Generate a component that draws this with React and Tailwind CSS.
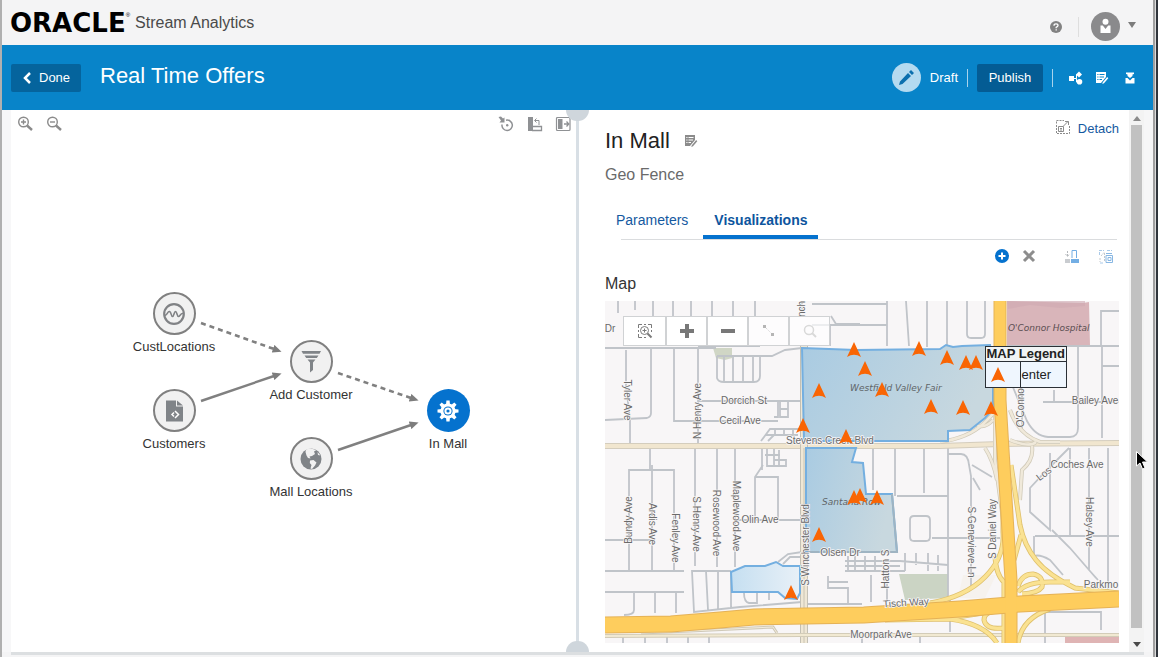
import React from "react";

const nodes = [
  { id: "CustLocations", x: 173, y: 314, icon: "wave" },
  { id: "Customers", x: 173, y: 411, icon: "file" },
  { id: "Add Customer", x: 310, y: 362, icon: "funnel" },
  { id: "Mall Locations", x: 310, y: 459, icon: "globe" },
  { id: "In Mall", x: 447, y: 411, icon: "gear" },
];

const edges = [
  { x1: 201, y1: 323, x2: 274, y2: 349, dashed: true },
  { x1: 201, y1: 401, x2: 274, y2: 376 },
  { x1: 338, y1: 373, x2: 411, y2: 398, dashed: true },
  { x1: 338, y1: 450, x2: 411, y2: 425 },
];

const markers = [
  [854, 350], [865, 369], [819, 391], [803, 426], [846, 437], [882, 390],
  [919, 349], [947, 358], [966, 363], [976, 363], [931, 407], [963, 408],
  [991, 409], [854, 498], [860, 496], [877, 498], [819, 535], [791, 593],
];

const streets = [
  "M618 301V313M635 301V310M653 301V316M673 301V316M691 301V316M712 301V316M733 301V316M755 301V316M802 301V313",
  "M812 304H887M830 325H887V301M812 325H830L860 325M830 325V346M887 325V346M906 301L909 346M927 301V347M947 301V346M967 301V334Q967 338 971 338H981Q985 338 985 334V301",
  "M605 348H716M626 350V385L630 420V444M651 348V413Q651 417 647 418L605 420M674 348V421H778M698 348V445M698 401H802M698 346H760",
  "M717 356H772L785 350L802 348M717 356V378Q718 382 724 382H754Q760 382 760 376V356M724 356V382M733 356V382M743 356V382M753 356V382",
  "M778 402V417H774M780 402V417H788V402M780 409H788M761 441L770 429H802M766 435H798M775 429V436M784 429V436M793 429V436M768 441L774 435",
  "M762 448V470M767 448V466H786V460H774M774 448V466M779 450V466M765 455H780M831 316L836 324H860",
  "M650 447V469M629 570V470H674V570M652 465V571M695 447V566M717 447V567M735 447V567",
  "M605 540H653M605 571H684M605 592H684M634 592V610Q634 615 624 615M655 592V613M676 592V613",
  "M731 571H692L694 612L740 607L802 602M706 571L708 610M718 571V609M731 571V608M744 593Q744 602 749 603H757V593M769 593V600M733 577H740",
  "M763 465L755 477V520M755 477H778V520M737 520H802M778 562L788 554L802 552M783 564L790 557H800",
  "M873 448V490M895 448V496M924 448V493M897 496H948M948 448V600M948 454H961Q968 454 969 465L971 476V588M972 465L992 477M932 538H1000",
  "M914 516H926Q930 516 930 520V537Q930 541 926 541H914Q910 541 910 537V520Q910 516 914 516Z",
  "M808 552H898M845 561H900L948 565M845 566H900M845 571H905M848 556V571M855 556V571M865 556V571M875 556V571M905 553V571M916 553V565M928 553V571M938 555V571",
  "M828 576V588H848V605M828 582H848M871 575V602M887 570V600M808 604H862",
  "M1007 346H1119M1078 346V428Q1078 437 1070 437H1048Q1035 436 1027 421L1010 380M1102 346V438M1102 366H1119M1101 346V311H1119M1054 390V402M1043 402H1119M1022 360V430",
  "M1069 448L1045 472L1030 488V512L1050 530V453M1070 448V535M1089 448V570L1098 580M1108 448V590M1035 536H1119M1034 536V556Q1040 554 1050 560L1063 575M1052 530L1070 548L1096 578",
  "M1045 643V612M1045 612H1101V630M973 478L980 490M950 600V632M862 636V643M920 637V643",
  "M623 637V643M645 637V643M667 637V643M688 637V643M709 637V643",
];

const labels = [
  { t: "Dr", x: 610, y: 329 },
  { t: "nch", x: 802, y: 309, r: -90 },
  { t: "Dorcich St", x: 744, y: 401 },
  { t: "Cecil Ave", x: 740, y: 421 },
  { t: "Tyler Ave", x: 627, y: 400, r: 90 },
  { t: "N Henry Ave", x: 698, y: 411, r: -90 },
  { t: "Stevens Creek Blvd", x: 830, y: 441 },
  { t: "Bundy Ave", x: 629, y: 520, r: -90 },
  { t: "Ardis Ave", x: 652, y: 524, r: 90 },
  { t: "Fenley Ave", x: 675, y: 538, r: 90 },
  { t: "S Henry Ave", x: 696, y: 524, r: 90 },
  { t: "Rosewood Ave", x: 716, y: 523, r: 90 },
  { t: "Maplewood Ave", x: 736, y: 516, r: 90 },
  { t: "Olin Ave", x: 760, y: 520 },
  { t: "Olsen Dr", x: 840, y: 553 },
  { t: "S Winchester Blvd", x: 806, y: 545, r: -90 },
  { t: "Hatton S", x: 886, y: 569, r: -90 },
  { t: "S Genevieve Ln", x: 971, y: 542, r: 90 },
  { t: "S Daniel Way", x: 993, y: 529, r: -90 },
  { t: "O'Connor", x: 1021, y: 406, r: -90 },
  { t: "Los", x: 1044, y: 474, r: -38 },
  { t: "Bailey Ave", x: 1095, y: 401 },
  { t: "Coches Ave", x: 1077, y: 465 },
  { t: "Halsey Ave", x: 1089, y: 522, r: 90 },
  { t: "Parkmo", x: 1101, y: 585 },
  { t: "Tisch Way", x: 906, y: 603, r: -4 },
  { t: "Moorpark Ave", x: 881, y: 635 },
];

function Arrow() {
  return <path d="M0-8L7 7Q0 2.500-7 7Z" fill="#f96504" />;
}

function NodeIcon({ kind }) {
  if (kind === "wave")
    return (
      <svg viewBox="0 0 24 24" className="size-6" fill="none" stroke="#808285">
        <circle cx="12" cy="12" r="9.800" strokeWidth="2.200" />
        <path d="M3 13C5 14 5.500 9 7.500 9.500S9 14.500 10.500 14.500S12 9.500 13.500 9.500S15 14.500 16.500 14.500S18.500 11 21 11.500" strokeWidth="1.600" />
      </svg>
    );
  if (kind === "file")
    return (
      <svg viewBox="0 0 24 24" className="size-6">
        <path d="M4 1.500H14V7.500H21V22.500H4Z" fill="#808488" />
        <path d="M15 1.500L21 6.500H15Z" fill="#808488" />
        <path d="M13 12L16.500 15.500L13 19M12 13.500L10 15.500L12 17.500" fill="none" stroke="#fff" strokeWidth="1.500" />
      </svg>
    );
  if (kind === "funnel")
    return (
      <svg viewBox="0 0 24 24" className="size-6" fill="#808488">
        <path d="M2.500 1H22L20.500 3.800H4ZM5.500 5.500H19.500L17.800 8H7.200ZM8.500 9.600H16.500L14 12.500V20L11 22.500V12.500Z" />
      </svg>
    );
  if (kind === "globe")
    return (
      <svg viewBox="0 0 24 24" className="size-6">
        <circle cx="12" cy="12" r="10.500" fill="#808488" />
        <path
          d="M7 2.500L11 1.300L17.500 3L15 4.500L16 7L13 9L10.500 9.500L11.500 11.500L9 11L7.500 8.500L6.500 5ZM11 13.500L14.500 13L17.500 15.500L16 18.500L13 22L11.500 21.500L12.500 18L10.800 16ZM18.500 5L21.500 8.500L19 8Z"
          fill="#f1f1f1"
        />
      </svg>
    );
  return (
    <svg viewBox="0 0 24 24" className="size-6">
      <g fill="#fff">
        <circle cx="12" cy="12" r="7.600" />
        {[0, 45, 90, 135, 180, 225, 270, 315].map((a) => (
          <path key={a} d="M10 6L10.400 1.500H13.600L14 6Z" transform={`rotate(${a} 12 12)`} />
        ))}
      </g>
      <circle cx="12" cy="12" r="4.600" fill="#0572ce" />
      <circle cx="12" cy="12" r="2.600" fill="none" stroke="#fff" strokeWidth="2" />
    </svg>
  );
}

function EditListIcon() {
  return (
    <svg viewBox="0 0 14 14" className="size-3.5" fill="currentColor">
      <path d="M1 1H11V6L6 12H1ZM2.300 3V4H3.500V3ZM4.500 3V4H9.500V3ZM2.300 5.500V6.500H3.500V5.500ZM4.500 5.500V6.500H9V5.500ZM2.300 8V9H3.500V8ZM4.500 8V9H7V8Z" fillRule="evenodd" />
      <path d="M12.200 6L13.300 7.200L9 12.200L7.300 13L7.800 11.300Z" />
    </svg>
  );
}

function Magnifier({ plus }) {
  return (
    <svg viewBox="0 0 16 16" className="size-4" fill="none" stroke="#8b8b8b">
      <circle cx="6.500" cy="6" r="4.800" strokeWidth="1.400" />
      <path d={plus ? "M4 6H9M6.500 3.500V8.500" : "M4 6H9"} strokeWidth="1.400" />
      <path d="M10 9.500L15 14" strokeWidth="2.400" />
    </svg>
  );
}

function Header() {
  return (
    <header className="flex h-[45px] items-center bg-[#f4f4f5] pl-2 pr-[17px]">
      <div className="flex items-start text-black">
        <span className="font-['DejaVu_Sans'] text-[26px] leading-8 font-bold">ORACLE</span>
        <span className="pt-1 text-[6px] leading-2">®</span>
      </div>
      <span className="ml-[5px] text-base text-[#4a4a4a]">Stream Analytics</span>
      <div className="mt-2 ml-auto flex items-center">
        <button aria-label="Help" className="block">
          <svg viewBox="0 0 12 12" className="size-3">
            <circle cx="6" cy="6" r="6" fill="#828282" />
            <path d="M4 4.700Q4 2.900 6 2.900T8 4.500Q8 5.500 6.200 6.300V7.300M6.200 8.200V9.500" fill="none" stroke="#fff" strokeWidth="1.300" />
          </svg>
        </button>
        <span className="ml-4 h-5 w-px bg-[#dedede]" />
        <button aria-label="User menu" className="ml-3 flex items-center gap-2">
          <svg viewBox="0 0 29 29" className="size-[29px]">
            <circle cx="14.500" cy="14.500" r="14.500" fill="#8a8a8c" />
            <circle cx="14.500" cy="9.800" r="3" fill="#fff" />
            <path d="M9.500 13.500H11.800L14.500 17L17.200 13.500H19.500V21H9.500Z" fill="#fff" />
          </svg>
          <svg viewBox="0 0 8 6" className="mb-1 h-1.5 w-2">
            <path d="M0 0H8L4 6Z" fill="#7c7c7c" />
          </svg>
        </button>
      </div>
    </header>
  );
}

function TitleBar() {
  return (
    <div className="flex h-[65px] items-center bg-[#0884c9] pl-[9px] pr-4 text-[13px] text-white">
      <button className="flex h-7 w-[70px] items-center gap-2 rounded-xs bg-[#05649d] pl-3">
        <svg viewBox="0 0 8 12" className="h-3 w-2" fill="none" stroke="#fff" strokeWidth="2.500">
          <path d="M7 1L2 6L7 11" />
        </svg>
        Done
      </button>
      <h1 className="ml-[19px] pb-1 text-[22px] leading-7">Real Time Offers</h1>
      <div className="ml-auto flex items-center">
        <svg viewBox="0 0 29 29" className="size-[29px]">
          <circle cx="14.500" cy="14.500" r="14.500" fill="#b4daf0" />
          <path d="M7 22L8 18.500L16 10L19 13L10.500 21ZM17 9L19 7L22 10L20 12Z" fill="#0b6fae" />
        </svg>
        <span className="ml-[9px]">Draft</span>
        <span className="ml-[9px] h-[18px] w-px bg-[#a8d3ec]" />
        <button className="ml-[9px] h-7 w-[66px] rounded-xs bg-[#045c94]">Publish</button>
        <span className="ml-[9px] h-[18px] w-px bg-[#a8d3ec]" />
        <button aria-label="Topology" className="ml-4">
          <svg viewBox="0 0 14 14" className="size-3.5" fill="#fff" stroke="#fff">
            <path d="M0 5H5V10H0Z" stroke="none" />
            <path d="M5 7.500H7.500V3.500H10M7.500 7.500V11H10" fill="none" />
            <path d="M10 0.500L13 3.500L10 6.500L7 3.500Z" stroke="none" />
            <circle cx="10.500" cy="10.800" r="2.800" stroke="none" />
          </svg>
        </button>
        <button aria-label="Edit details" className="ml-3">
          <EditListIcon />
        </button>
        <button aria-label="Owner" className="ml-[14px]">
          <svg viewBox="0 0 14 14" className="size-3.5" fill="#fff">
            <path d="M3 1.500H11V3L9.500 3.500V5L7 7L4.500 5V3.500L3 3Z" />
            <path d="M2.500 7H4.500L7 9.500L9.500 7H11.500V12.500H2.500Z" />
          </svg>
        </button>
      </div>
    </div>
  );
}

function Pipeline() {
  return (
    <section className="relative min-w-0 overflow-hidden border-l-[9px] border-[#f7f7f8] bg-white">
      <div className="flex items-center pt-[6px] pr-[5px] pl-[6px]">
        <button aria-label="Zoom in"><Magnifier plus /></button>
        <button aria-label="Zoom out" className="ml-[13px]"><Magnifier /></button>
        <button aria-label="Reset position" className="ml-auto">
          <svg viewBox="0 0 16 16" className="size-4" fill="none" stroke="#8f9194">
            <path d="M8 4.200A5.200 5.200 0 1 1 4 8.500" strokeWidth="1.500" />
            <circle cx="9.200" cy="9.200" r="1.200" fill="#8f9194" stroke="none" />
            <path d="M0.500 1L3 0.500L5 2.500L6.500 1.500V6.500H1.500L3 4.500Z" fill="#8f9194" stroke="none" />
          </svg>
        </button>
        <button aria-label="Toggle bottom pane" className="ml-[13px]">
          <svg viewBox="0 0 16 16" className="size-4" fill="none" stroke="#8f9194">
            <path d="M1 1H6V15H1Z" fill="#8f9194" stroke="none" />
            <path d="M5 10.500H14.500V14.500H5" strokeWidth="1.300" />
            <path d="M8 4.500H12V9M9.500 2.500L7.500 4.500L9.500 6.500" />
          </svg>
        </button>
        <button aria-label="Toggle side pane" className="ml-[12px]">
          <svg viewBox="0 0 16 16" className="size-4" fill="none" stroke="#8f9194">
            <rect x="1.500" y="1.500" width="13.500" height="13" rx="1" strokeWidth="1.200" />
            <path d="M3 3H7.500V13H3Z" fill="#8f9194" stroke="none" />
            <path d="M9 8H13.500M11.500 5.500L13.800 8L11.500 10.500" strokeWidth="1.300" />
          </svg>
        </button>
      </div>
      <svg className="pointer-events-none absolute top-0 left-0 h-full w-full">
        <defs>
          <marker id="tip" markerUnits="userSpaceOnUse" markerWidth="9" markerHeight="8" refX="1" refY="4" orient="auto">
            <path d="M0 0L9 4L0 8Z" fill="#7d7d7d" />
          </marker>
        </defs>
        <g transform="translate(-11 -110)" stroke="#808080">
          {edges.map((e, i) => (
            <line key={i} x1={e.x1} y1={e.y1} x2={e.x2} y2={e.y2} strokeWidth={e.dashed ? 2.6 : 2.4} strokeDasharray={e.dashed ? "5 4" : undefined} markerEnd="url(#tip)" />
          ))}
        </g>
      </svg>
      {nodes.map((n) => {
        const active = n.id === "In Mall";
        return (
          <button
            key={n.id}
            className="absolute flex w-28 -translate-x-1/2 flex-col items-center text-[13px] leading-4 text-[#333]"
            style={{ left: n.x - 10, top: n.y - 132 }}
          >
            <span className={active ? "flex size-[43px] items-center justify-center rounded-full bg-[#0572ce]" : "flex size-[43px] items-center justify-center rounded-full border-2 border-[#808080] bg-[#f1f1f1]"}>
              <NodeIcon kind={n.icon} />
            </span>
            <span className="mt-1 whitespace-nowrap">{n.id}</span>
          </button>
        );
      })}
    </section>
  );
}

function StreetMap() {
  return (
    <svg viewBox="605 301 514 342" className="block w-full" role="img" aria-label="Street map">
      <defs>
        <linearGradient id="zone" x1="0" x2="1" y1="0" y2="0.3">
          <stop offset="0" stopColor="#a9cbe2" />
          <stop offset="1" stopColor="#c8d8df" />
        </linearGradient>
        <linearGradient id="lot" x1="0" x2="1">
          <stop offset="0" stopColor="#c5dff1" />
          <stop offset="1" stopColor="#e8f0f7" />
        </linearGradient>
      </defs>
      <rect x="605" y="301" width="514" height="342" fill="#f8f6f7" />
      <path d="M1007 301L1083 303L1089 302L1090 346H1007Z" fill="#d9b5ba" />
      <path d="M1008 309L1030 305L1060 308L1085 306V301H1007Z" fill="#cfaab2" opacity="0.6" />
      <path d="M1065 637H1119V643H1065Z" fill="#dfb4b4" />
      <path d="M713 348H732V358L725 360L716 358Z" fill="#d0d6c5" />
      <path d="M899 574H948V598L905 600Z" fill="#cbd4c4" />
      <path d="M963 575H996L985 598H958Z" fill="#f6f2ee" />
      <g fill="none" stroke="#c0c4c9" strokeWidth="1.800">
        {streets.map((d, i) => (
          <path key={i} d={d} />
        ))}
      </g>

      <g fill="none">
        <path d="M605 446H940L1000 444L1119 443" stroke="#d4cdbd" strokeWidth="6" />
        <path d="M605 446H940L1000 444L1119 443" stroke="#f1e6cf" strokeWidth="4" />
        <path d="M804 345V643" stroke="#c3c0b5" strokeWidth="8" />
        <path d="M804 345V643" stroke="#efe7d5" strokeWidth="6" />
        <path d="M804 448V643" stroke="#c9c4b4" />
        <path d="M605 636L800 635H1119" stroke="#d3ccb8" strokeWidth="4" />
        <path d="M605 636L800 635H1119" stroke="#f1e9d2" strokeWidth="2" />
        <path d="M641 633L690 631L773 627L777 633" stroke="#cfc9b8" strokeWidth="3" />
        <path d="M641 633L690 631L773 627L777 633" stroke="#f3ecdb" />
        <path d="M940 442Q968 438 983 424T995 408V460L1003 520M1010 410Q1018 434 1040 442H1060M985 448Q993 460 997 480M1010 440Q1030 448 1036 442M1032 446Q1034 460 1022 470L1020 500M993 420Q984 430 975 424" stroke="#cfc9b8" strokeWidth="4" />
        <path d="M940 442Q968 438 983 424T995 408V460L1003 520M1010 410Q1018 434 1040 442H1060M985 448Q993 460 997 480M1010 440Q1030 448 1036 442M1032 446Q1034 460 1022 470L1020 500M993 420Q984 430 975 424" stroke="#f0e9da" strokeWidth="2.500" />
      </g>

      <g stroke="#74afe0" strokeWidth="2">
        <path d="M802 348L856 350L940 349L946 345L953 347L962 346L990 345L993 370V409L985 418L970 430L948 431V441H804Z" fill="url(#zone)" />
        <path d="M806 448H856L852 462L863 463L866 494H892L897 552H806Z" fill="url(#zone)" />
        <path d="M731 572L745 566H765L776 562L783 566H800V593L797 599L785 598L778 592H732Z" fill="url(#lot)" />
      </g>
      <path d="M892 494L897 552H808" fill="none" stroke="#9fb4c2" strokeWidth="2" />

      <g fill="none">
        {[["#dfc06c", 5], ["#fae292", 3.4]].map(([c, w]) => (
          <path
            key={c}
            stroke={c}
            strokeWidth={w}
            d="M930 603Q965 597 985 577T1003 532V480M995 556Q996 575 1004 582V643M1011 465L1020 525Q1024 545 1036 560T1075 588L1119 593M1018 592Q1026 582 1050 582H1070M1018 586Q1022 574 1033 574Q1044 576 1042 587Q1038 593 1022 594M885 620L950 619Q985 624 997 643M950 618L990 612M1003 611Q984 610 984 620Q986 630 1003 628M1018 643Q1022 618 1050 609M1014 560L1021 535"
          />
        ))}
        <path d="M605 625L671 624L720 620L754 617L864 615L960 609L1020 604L1119 599" stroke="#e5b257" strokeWidth="17" />
        <path d="M1000 301V400L1003 450L1011 580V643" stroke="#e5b257" strokeWidth="13" />
        <path d="M605 625L671 624L720 620L754 617L864 615L960 609L1020 604L1119 599" stroke="#fecd5d" strokeWidth="15" />
        <path d="M1000 301V400L1003 450L1011 580V643" stroke="#fecd5d" strokeWidth="11" />
      </g>

      <g
        fontFamily="'Liberation Sans', Arial, sans-serif"
        fontSize="10"
        fill="#6a6a6a"
        stroke="#f8f6f7"
        strokeWidth="1.500"
        paintOrder="stroke"
        textAnchor="middle"
      >
        {labels.map((l) => (
          <text key={l.t} x={l.x} y={l.y + 3} transform={`rotate(${l.r || 0} ${l.x} ${l.y})`}>
            {l.t}
          </text>
        ))}
      </g>
      <g fontFamily="'DejaVu Sans', sans-serif" fontStyle="italic" fontSize="9" fill="#5f6568">
        <text x="850" y="391">Westfield Valley Fair</text>
        <text x="822" y="505">Santana Row</text>
        <text x="1008" y="331" fill="#5c4f52">O&#39;Connor Hospital</text>
      </g>
      {markers.map(([x, y]) => (
        <g key={`${x}-${y}`} transform={`translate(${x} ${y})`}>
          <Arrow />
        </g>
      ))}
    </svg>
  );
}

const mapTools = [
  {
    name: "Marquee zoom",
    art: (
      <g fill="none" stroke="#7b7b7b">
        <path d="M1.500 5V1.500H5M7 1.500H9M11 1.500H14.500V5M14.500 7V9M1.500 7V9M1.500 11V14.500H5M7 14.500H9" />
        <circle cx="7.500" cy="7.500" r="4" />
        <path d="M5.500 7.500H9.500M7.500 5.500V9.500" />
        <path d="M10.500 10.500L14.500 14.500" strokeWidth="2" />
      </g>
    ),
  },
  { name: "Zoom in", art: <path d="M6 1H10V6H15V10H10V15H6V10H1V6H6Z" fill="#787878" /> },
  { name: "Zoom out", art: <path d="M1 6H15V10H1Z" fill="#787878" /> },
  {
    name: "Measure distance",
    art: (
      <g fill="#b5b5b5">
        <path d="M2 2H5V5H2ZM10 10H13V13H10Z" />
        <path d="M5 5L10 10" stroke="#c6c6c6" strokeDasharray="1 1.500" />
      </g>
    ),
  },
  {
    name: "Search map",
    art: (
      <g fill="none" stroke="#d9d9d9" strokeWidth="1.500">
        <circle cx="7" cy="7" r="4.500" />
        <path d="M10 10L14 14" strokeWidth="2" />
      </g>
    ),
  },
];

function MapView() {
  return (
    <div className="relative mt-[5px] overflow-hidden">
      <StreetMap />
      <div className="absolute top-[15px] left-[18px] flex border border-[#d0d2d4]">
        {mapTools.map((t, i) => (
          <button
            key={t.name}
            aria-label={t.name}
            className={
              (i > 0 ? "border-l-2 border-[#d0d2d4] " : "") +
              (i > 2 ? "bg-white/70 " : "bg-white/95 ") +
              "flex h-7 w-[41px] items-center justify-center"
            }
          >
            <svg viewBox="0 0 16 16" className="size-4">{t.art}</svg>
          </button>
        ))}
      </div>
      <table className="absolute top-[45px] right-[52px] border-collapse border border-[#2b3036] bg-[#eff6fe] text-[13px] leading-[14px] text-[#222]">
        <thead>
          <tr>
            <th colSpan={2} className="border border-[#2b3036] bg-[#f1f4f5] px-px font-bold whitespace-nowrap">
              MAP Legend
            </th>
          </tr>
        </thead>
        <tbody>
          <tr>
            <td className="h-[26px] w-[35px] border border-[#2b3036]">
              <svg viewBox="-8 -8 16 16" className="mr-auto ml-1 size-4"><Arrow /></svg>
            </td>
            <td className="border border-[#2b3036] px-px">enter</td>
          </tr>
        </tbody>
      </table>
    </div>
  );
}

function Details() {
  return (
    <section className="flex min-w-0 bg-white">
      <div className="min-w-0 flex-1 pt-2 pr-[10px] pb-[9px] pl-[26px]">
        <div className="flex items-start">
          <h2 className="pt-2 text-[22px] leading-[30px] text-[#222]">In Mall</h2>
          <button aria-label="Edit stage" className="mt-[14px] ml-3 p-0.5 text-[#8b8b8b]">
            <EditListIcon />
          </button>
          <a href="#detach" className="ml-auto flex h-[22px] items-center gap-2 text-[13px] text-[#15599f]">
            <svg viewBox="0 0 14 14" className="mb-1 size-3.5" fill="none" stroke="#8b8b8b">
              <path d="M0.500 3.500V0.500H8M13.500 6V13.500H0.500V5" strokeDasharray="2 1" />
              <path d="M2.500 6.500H7.500V11.500H2.500ZM4 8.500H6M4 10H6" />
              <path d="M7.500 6L12 1.500M9 1.500H12.500V5" />
            </svg>
            Detach
          </a>
        </div>
        <p className="mt-[7px] text-base leading-6 text-[#6a6a6a]">Geo Fence</p>
        <div role="tablist" className="mt-[15px] flex gap-1 text-sm text-[#15599f]">
          <button role="tab" aria-selected="false" className="h-[37px] px-[11px] pt-[3px] pb-1">Parameters</button>
          <button role="tab" aria-selected="true" className="h-[37px] border-b-4 border-[#0572ce] px-[11px] pt-[3px] font-bold text-[#0d559e]">
            Visualizations
          </button>
        </div>
        <div className="mr-0.5 ml-4 h-px bg-[#dadcde]" />
        <div className="flex h-8 items-center justify-end pr-[5px]">
          <button aria-label="Add visualization">
            <svg viewBox="0 0 16 16" className="size-4">
              <circle cx="8" cy="8" r="7" fill="#0572ce" />
              <path d="M8 4.500V11.500M4.500 8H11.500" stroke="#fff" strokeWidth="2" />
            </svg>
          </button>
          <button aria-label="Delete visualization" className="ml-[11px]">
            <svg viewBox="0 0 16 16" className="size-4">
              <path d="M3 3L13 13M13 3L3 13" stroke="#8d8d8d" strokeWidth="3" />
            </svg>
          </button>
          <button aria-label="Move chart down" className="ml-[27px]">
            <svg viewBox="0 0 16 16" className="size-4" fill="none">
              <path d="M1 11H6V15H1Z" fill="#c9ccd0" />
              <path d="M7 11H15V15H7Z" fill="#73aee4" />
              <path d="M8 10V2.500H12.500V10" stroke="#73aee4" />
              <path d="M3.500 3V8M1.500 6L3.500 8.500L5.500 6" stroke="#b5b8bc" strokeDasharray="2 1" />
            </svg>
          </button>
          <button aria-label="Expand chart" className="ml-[18px]">
            <svg viewBox="0 0 16 16" className="size-4" fill="none">
              <path d="M1 2.500H6M9 2.500H14M1.500 4V8M2 15H6" stroke="#a9c9e8" strokeDasharray="3 1" />
              <path d="M3 8L6 4.500M2 10V14M6.500 5V14" stroke="#c4c8cc" strokeDasharray="2 1" />
              <path d="M8 7.500H14.500V14.500H8ZM10 9.500H13V12.500H10ZM8 5.500H14" stroke="#88b7e3" />
            </svg>
          </button>
        </div>
        <h3 className="text-base leading-6 text-[#333]">Map</h3>
        <MapView />
      </div>
      <div className="flex w-[15px] flex-col items-center bg-[#f3f3f3] pt-[6px]">
        <svg viewBox="0 0 8 5" className="h-[5px] w-2"><path d="M0 5H8L4 0Z" fill="#8a8a8a" /></svg>
        <div className="mt-1 mb-[14px] w-[11px] flex-1 bg-[#c1c1c1]" />
        <svg viewBox="0 0 8 5" className="mb-[5px] h-[5px] w-2"><path d="M0 0H8L4 5Z" fill="#4a4a4a" /></svg>
      </div>
      <div className="w-[9px] bg-[#f6f6f7]" />
    </section>
  );
}

export default function App() {
  return (
    <div className="relative flex min-h-screen bg-[#f4f4f5] font-['Liberation_Sans',Arial,sans-serif]">
      <div className="w-0.5 bg-[#b0b0b0]" />
      <div className="flex min-w-0 flex-1 flex-col">
        <Header />
        <TitleBar />
        <main className="grid flex-1 grid-cols-[1fr_3px_1fr]">
          <Pipeline />
          <div className="relative bg-[#d8dfe5]">
            <div className="absolute top-0 -left-[10px] h-[11px] w-[23px] rounded-b-full bg-[#cfd6dc]" />
            <div className="absolute bottom-0 -left-[10px] h-[11px] w-[23px] rounded-t-full bg-[#cfd6dc]" />
          </div>
          <Details />
        </main>
        <div className="mr-[9px] ml-[9px] h-[3px] bg-[#dcdfe1]" />
        <div className="h-0.5" />
      </div>
      <div className="flex w-[5px]">
        <div className="w-0.5 bg-[#a0a0a0]" />
        <div className="w-px bg-[#dcdcdc]" />
        <div className="w-0.5 bg-[#30353c]" />
      </div>
      <svg viewBox="0 0 12 19" className="pointer-events-none absolute top-[451px] right-[10px] h-[19px] w-3">
        <path d="M0.500 0.500V15L4 12L6.500 18L9 17L6.500 11H11.500Z" fill="#000" stroke="#fff" />
      </svg>
    </div>
  );
}
